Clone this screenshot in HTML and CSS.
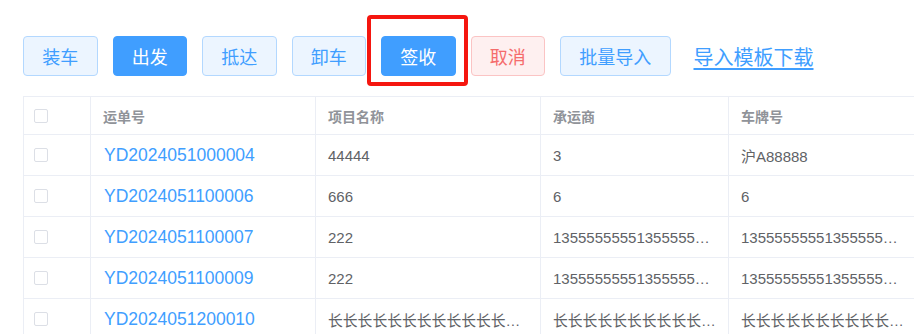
FILE: index.html
```html
<!DOCTYPE html>
<html lang="zh-CN">
<head>
  <meta charset="UTF-8">
  <meta name="viewport" content="width=device-width, initial-scale=1.0">
  <title>运单管理</title>
  <link rel="stylesheet" href="styles.css">
</head>
<body>
  <div class="page">
    <div class="toolbar">
      <button class="btn btn-plain">装车</button>
      <button class="btn btn-primary">出发</button>
      <button class="btn btn-plain">抵达</button>
      <button class="btn btn-plain">卸车</button>
      <span class="mark"><button class="btn btn-primary">签收</button></span>
      <button class="btn btn-danger">取消</button>
      <button class="btn btn-plain">批量导入</button>
      <a class="download" href="#">导入模板下载</a>
    </div>

    <table class="grid">
      <colgroup>
        <col class="col-check">
        <col class="col-wide">
        <col class="col-wide">
        <col class="col-mid">
        <col class="col-last">
      </colgroup>
      <thead>
        <tr>
          <th class="check"><span class="box"></span></th>
          <th>运单号</th>
          <th>项目名称</th>
          <th>承运商</th>
          <th>车牌号</th>
        </tr>
      </thead>
      <tbody>
        <tr>
          <td class="check"><span class="box"></span></td>
          <td><a class="code" href="#">YD2024051000004</a></td>
          <td>44444</td>
          <td>3</td>
          <td>沪A88888</td>
        </tr>
        <tr>
          <td class="check"><span class="box"></span></td>
          <td><a class="code" href="#">YD2024051100006</a></td>
          <td>666</td>
          <td>6</td>
          <td>6</td>
        </tr>
        <tr>
          <td class="check"><span class="box"></span></td>
          <td><a class="code" href="#">YD2024051100007</a></td>
          <td>222</td>
          <td>135555555513555555555</td>
          <td>135555555513555555555</td>
        </tr>
        <tr>
          <td class="check"><span class="box"></span></td>
          <td><a class="code" href="#">YD2024051100009</a></td>
          <td>222</td>
          <td>135555555513555555555</td>
          <td>135555555513555555555</td>
        </tr>
        <tr>
          <td class="check"><span class="box"></span></td>
          <td><a class="code" href="#">YD2024051200010</a></td>
          <td class="long">长长长长长长长长长长长长长长长长长长长长</td>
          <td class="long">长长长长长长长长长长长长长长长长长长长长</td>
          <td class="long">长长长长长长长长长长长长长长长长长长长长</td>
        </tr>
      </tbody>
    </table>
  </div>
</body>
</html>
```

FILE: styles.css
```css
body {
  margin: 0;
  background: #fff;
  font-family: "Liberation Sans", "Noto Sans CJK SC", sans-serif;
  overflow: hidden;
}
.page {
  padding: 36px 0 0 23px;
}
.toolbar {
  display: flex;
  align-items: center;
  gap: 15px;
  height: 40px;
}
.btn {
  height: 40px;
  padding: 0 18.25px;
  font-family: "Noto Sans CJK SC", sans-serif;
  font-size: 18px;
  border: 1px solid;
  border-radius: 4px;
  cursor: pointer;
  line-height: 1;
}
.btn-plain {
  background: #ecf5ff;
  border-color: #b3d8ff;
  color: #409eff;
}
.btn-primary {
  background: #409eff;
  border-color: #409eff;
  color: #fff;
}
.btn-danger {
  background: #fef0f0;
  border-color: #fbc4c4;
  color: #f56c6c;
}
.mark {
  position: relative;
  display: flex;
}
.mark::after {
  content: "";
  position: absolute;
  left: -14px;
  right: -12px;
  top: -21px;
  bottom: -10px;
  border: 4px solid #f5160f;
  border-radius: 4px;
}
.download {
  margin-left: 8px;
  font-family: "Noto Sans CJK SC", sans-serif;
  font-size: 20px;
  color: #409eff;
  text-decoration: underline;
  text-underline-offset: 3px;
}
.grid {
  margin-top: 20px;
  border-collapse: collapse;
  table-layout: fixed;
  width: 895px;
  font-size: 15px;
  color: #606266;
}
.col-check { width: 67px; }
.col-wide { width: 225px; }
.col-mid { width: 188px; }
.col-last { width: 190px; }
.grid th,
.grid td {
  border: 1px solid #ebeef5;
  padding: 0 12px;
  text-align: left;
  white-space: nowrap;
  overflow: hidden;
  text-overflow: ellipsis;
}
.grid th {
  height: 37px;
  font-family: "Noto Sans CJK SC", sans-serif;
  font-size: 14px;
  font-weight: bold;
  color: #909399;
}
.grid td {
  height: 40px;
}
.grid td.long {
  font-size: 14.8px;
}
.grid .check {
  padding-left: 10px;
}
.box {
  display: block;
  width: 12px;
  height: 12px;
  border: 1px solid #dcdfe6;
  border-radius: 2px;
  background: #fff;
}
.code {
  padding-left: 1px;
  font-size: 17.5px;
  color: #409eff;
  text-decoration: none;
}
```
